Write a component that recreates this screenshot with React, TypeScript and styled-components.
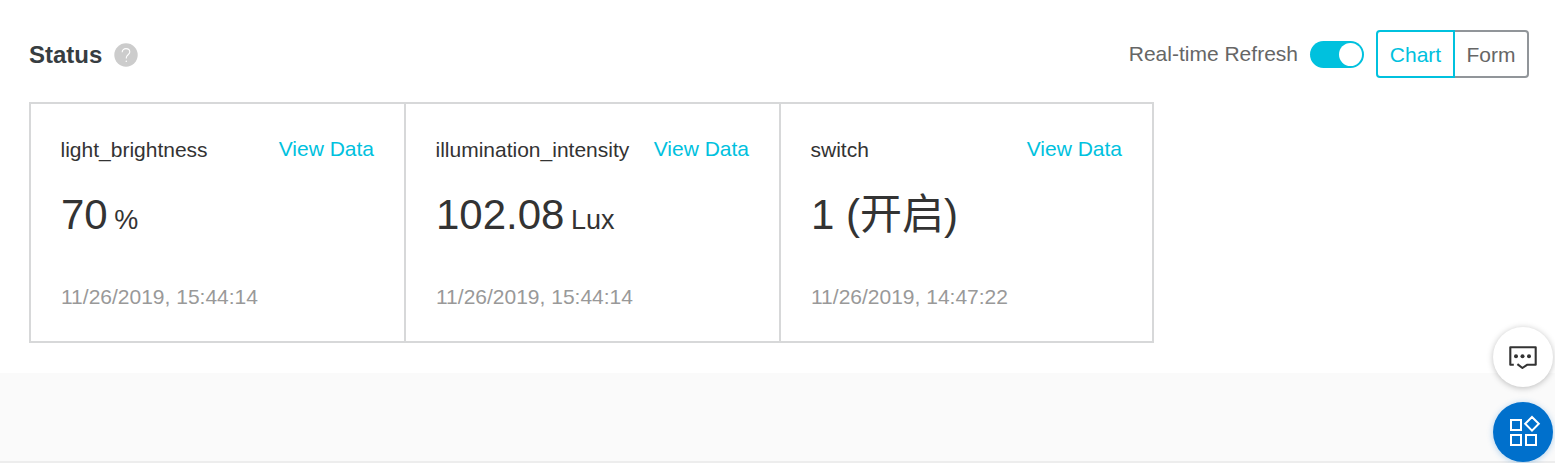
import React from "react";
import styled, { createGlobalStyle } from "styled-components";

const GlobalStyle = createGlobalStyle`
  * { box-sizing: border-box; }
  body {
    margin: 0;
    background: #fafafa;
    font-family: "Liberation Sans", "Noto Sans CJK SC", sans-serif;
    font-size: 21px;
    color: #333;
  }
`;

const Page = styled.main`
  height: 463px;
  overflow: hidden;
  border-bottom: 2px solid #ededed;
`;

const Panel = styled.section`
  height: 373px;
  padding: 30px 26px 0 29px;
  background: #fff;
`;

const Header = styled.header`
  display: flex;
  align-items: center;
  justify-content: space-between;
  height: 48px;
  margin-bottom: 24px;
`;

const TitleGroup = styled.div`
  display: flex;
  align-items: center;
  gap: 12px;
  padding-top: 2px;
`;

const Title = styled.h2`
  margin: 0;
  font-size: 24px;
  line-height: 28px;
  color: #373d41;
`;

const HelpIcon = styled.svg`
  display: block;
  width: 24px;
  height: 24px;
`;

const Controls = styled.div`
  display: flex;
  align-items: center;
`;

const RefreshLabel = styled.span`
  margin: 0 12px 0 0;
  line-height: 24px;
  color: #666;
`;

const Toggle = styled.button`
  display: flex;
  justify-content: flex-end;
  width: 54px;
  height: 27px;
  margin: 1px 12px 0 0;
  padding: 2px;
  border: 0;
  border-radius: 14px;
  background: #00c1de;
`;

const Knob = styled.span`
  width: 23px;
  height: 23px;
  border-radius: 50%;
  background: #fff;
`;

const Segmented = styled.div`
  display: flex;
`;

const Segment = styled.button<{ $active?: boolean }>`
  width: ${(p) => (p.$active ? 79 : 74)}px;
  height: 48px;
  padding: 2px 0 0;
  border: 2px solid ${(p) => (p.$active ? "#00c1de" : "#919599")};
  border-left-width: ${(p) => (p.$active ? 2 : 0)}px;
  border-radius: ${(p) => (p.$active ? "4px 0 0 4px" : "0 4px 4px 0")};
  background: #fff;
  font: inherit;
  color: ${(p) => (p.$active ? "#00c1de" : "#666")};
`;

const Cards = styled.div`
  display: grid;
  grid-template-columns: 375px 375px 371px;
  width: 1125px;
  height: 241px;
  border: 2px solid #d7d8d9;
`;

const Card = styled.article`
  padding: 32px 30px 0 29.5px;
  border-right: 2px solid #d7d8d9;
  white-space: nowrap;

  &:last-child {
    border-right: 0;
  }
`;

const CardHead = styled.div`
  display: flex;
  justify-content: space-between;
  height: 26px;
`;

const Name = styled.span`
  padding-top: 2px;
  line-height: 24px;
`;

const ViewLink = styled.a`
  line-height: 26px;
  color: #00c1de;
`;

const Reading = styled.div`
  height: 50px;
  margin-top: 28px;
  padding-left: 0.5px;
  font-size: 42px;
  line-height: 50px;
`;

const Unit = styled.span`
  margin-left: 6.5px;
  font-size: 27px;
`;

const Time = styled.time`
  display: block;
  margin-top: 45px;
  padding-left: 0.5px;
  line-height: 24px;
  color: #999;
`;

const FloatingTools = styled.aside`
  position: fixed;
  right: 2px;
  bottom: 1px;
  display: flex;
  flex-direction: column;
  gap: 15px;
`;

const RoundButton = styled.button<{ $primary?: boolean }>`
  display: block;
  width: 60px;
  height: 60px;
  padding: 0;
  border: 0;
  border-radius: 50%;
  background: ${(p) => (p.$primary ? "#0070cc" : "#fff")};
  box-shadow: 0 1px 6px
    ${(p) => (p.$primary ? "rgba(0, 112, 204, 0.3)" : "rgba(0, 0, 0, 0.25)")};

  svg {
    display: block;
  }
`;

const readings = [
  { name: "light_brightness", value: "70", unit: "%", time: "11/26/2019, 15:44:14" },
  { name: "illumination_intensity", value: "102.08", unit: "Lux", time: "11/26/2019, 15:44:14" },
  { name: "switch", value: "1 (开启)", unit: "", time: "11/26/2019, 14:47:22" },
];

export default function App() {
  return (
    <Page>
      <GlobalStyle />
      <Panel>
        <Header>
          <TitleGroup>
            <Title>Status</Title>
            <HelpIcon viewBox="0 0 24 24" fill="none">
              <circle cx="12" cy="12" r="11.7" fill="#ccc" />
              <path d="M8.2 9.2C8.2 7 9.8 5.6 12 5.6s3.8 1.4 3.8 3.4c0 2.5-3.5 3-3.5 5.7v.7" stroke="#fff" strokeWidth="1.1" />
              <circle cx="12.3" cy="18.2" r=".8" fill="#fff" />
            </HelpIcon>
          </TitleGroup>
          <Controls>
            <RefreshLabel>Real-time Refresh</RefreshLabel>
            <Toggle role="switch" aria-checked="true">
              <Knob />
            </Toggle>
            <Segmented>
              <Segment $active>Chart</Segment>
              <Segment>Form</Segment>
            </Segmented>
          </Controls>
        </Header>
        <Cards>
          {readings.map((r) => (
            <Card key={r.name}>
              <CardHead>
                <Name>{r.name}</Name>
                <ViewLink>View Data</ViewLink>
              </CardHead>
              <Reading>
                {r.value}
                {r.unit && <Unit>{r.unit}</Unit>}
              </Reading>
              <Time>{r.time}</Time>
            </Card>
          ))}
        </Cards>
      </Panel>
      <FloatingTools>
        <RoundButton>
          <svg width="60" height="60" viewBox="0 0 60 60" fill="none">
            <path d="M20.8 37.8H17.3V20.2H42.7V37.8H34L29.4 41L24.4 37.2" stroke="#333" strokeWidth="2.1" strokeLinejoin="round" />
            <circle cx="23" cy="29.3" r="2" fill="#333" />
            <circle cx="29.5" cy="29.3" r="2" fill="#333" />
            <circle cx="36" cy="29.3" r="2" fill="#333" />
          </svg>
        </RoundButton>
        <RoundButton $primary>
          <svg width="60" height="60" viewBox="0 0 60 60" fill="none" stroke="#fff" strokeWidth="2">
            <path d="M18 18H28V28H18ZM18 33H28V43H18ZM33 33H43V43H33ZM39 15L45.8 21.8L39 28.6L32.2 21.8Z" />
          </svg>
        </RoundButton>
      </FloatingTools>
    </Page>
  );
}
